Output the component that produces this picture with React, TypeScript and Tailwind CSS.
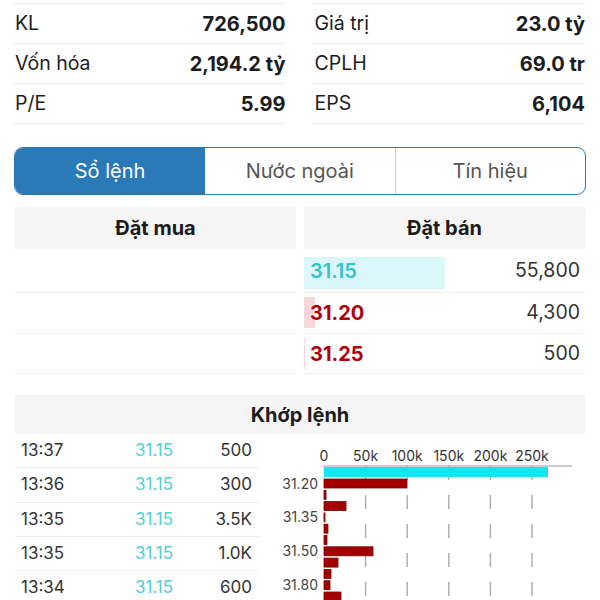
import React from "react";

const font = { fontFamily: "Inter, 'Noto Sans', sans-serif" };

const stats: [string, string, string, string][] = [
  ["KL", "726,500", "Giá trị", "23.0 tỷ"],
  ["Vốn hóa", "2,194.2 tỷ", "CPLH", "69.0 tr"],
  ["P/E", "5.99", "EPS", "6,104"],
];

const trades = [
  ["13:37", "31.15", "500"],
  ["13:36", "31.15", "300"],
  ["13:35", "31.15", "3.5K"],
  ["13:35", "31.15", "1.0K"],
  ["13:34", "31.15", "600"],
];

function Chart() {
  const x0 = 54;
  const step = 41.6;
  const ticks = ["0", "50k", "100k", "150k", "200k", "250k"];
  const bars = [83, 2, 22, 1, 4, 3, 49, 14, 7, 6, 17];
  const labels: Record<number, string> = { 0: "31.20", 3: "31.35", 6: "31.50", 9: "31.80" };
  return (
    <svg width="320" height="167" viewBox="0 0 320 167" className="block">
      {ticks.map((t, i) => (
        <text
          key={t}
          x={x0 + i * step}
          y={27}
          textAnchor="middle"
          fontSize="14"
          fill="#333"
          fontFamily="Inter, sans-serif"
        >
          {t}
        </text>
      ))}
      {ticks.slice(1).map((t, i) => (
        <line
          key={"g" + t}
          x1={x0 + (i + 1) * step}
          x2={x0 + (i + 1) * step}
          y1={32}
          y2={167}
          stroke="#b0b0b0"
          strokeWidth="1.5"
          strokeDasharray="14 15"
        />
      ))}
      <line x1={53} x2={302} y1={32} y2={32} stroke="#9a9a9a" strokeWidth="1" />
      <rect x={x0} y={33} width={224} height={10} fill="#12e6f0" />
      {bars.map((w, i) => (
        <rect
          key={i}
          x={x0}
          y={45 + i * 11.3}
          width={Math.max(w, 1)}
          height={9}
          fill="#a30000"
          stroke="#7a0000"
          strokeWidth="0.8"
        />
      ))}
      {Object.entries(labels).map(([k, v]) => (
        <text
          key={k}
          x={48}
          y={45 + Number(k) * 11.3 + 9.5}
          textAnchor="end"
          fontSize="14"
          fill="#444"
          fontFamily="Inter, sans-serif"
        >
          {v}
        </text>
      ))}
    </svg>
  );
}

export default function App() {
  return (
    <div className="w-[600px] h-[600px] overflow-hidden bg-white text-[#1c1c1e]" style={font}>
      {/* stats */}
      <div className="pt-[3px] pl-[13px] pr-[15px] grid grid-cols-2 gap-x-[27px]">
        {[0, 1].map((col) => (
          <div key={col} className="border-b border-[#ececec]">
            {stats.map((r) => (
              <div key={r[col * 2]} className="h-10 border-t border-[#ececec] flex items-center justify-between pl-[2px]">
                <span className="text-[19.5px]">{r[col * 2]}</span>
                <span className="text-[20px] font-bold">{r[col * 2 + 1]}</span>
              </div>
            ))}
          </div>
        ))}
      </div>

      {/* tabs */}
      <div className="mt-[23px] mx-[14px] h-12 rounded-[9px] border border-[#2c7ab5] flex overflow-hidden text-[20px]">
        <div className="w-[190px] bg-[#2a7ab8] text-white flex items-center justify-center">Sổ lệnh</div>
        <div className="flex-1 flex items-center justify-center text-[#555] border-r border-[#cfcfcf]">Nước ngoài</div>
        <div className="flex-1 flex items-center justify-center text-[#555]">Tín hiệu</div>
      </div>

      {/* order book */}
      <div className="mt-[12px] px-[15px] grid grid-cols-2 gap-x-2">
        <div>
          <div className="h-[42px] bg-[#f5f5f5] flex items-center justify-center text-[20px] font-bold">Đặt mua</div>
          <div className="h-[44px] border-b border-[#eeeeee]" />
          <div className="h-[41px] border-b border-[#eeeeee]" />
          <div className="h-[40px] border-b border-[#eeeeee]" />
        </div>
        <div>
          <div className="h-[42px] bg-[#f5f5f5] flex items-center justify-center text-[20px] font-bold">Đặt bán</div>
          <div className="h-[44px] border-b border-[#eeeeee] relative flex items-center justify-between pr-[5px]">
            <div className="absolute left-0 top-[8px] h-[32px] w-[141px] bg-[#dcf7f9]" />
            <span className="relative pl-[6px] text-[20px] font-semibold text-[#33c4cc]">31.15</span>
            <span className="relative text-[19.5px] text-[#333]">55,800</span>
          </div>
          <div className="h-[41px] border-b border-[#eeeeee] relative flex items-center justify-between pr-[5px]">
            <div className="absolute left-0 top-[4px] h-[31px] w-[11px] bg-[#f8d7da]" />
            <span className="relative pl-[6px] text-[20px] font-bold text-[#b0000c]">31.20</span>
            <span className="relative text-[19.5px] text-[#333]">4,300</span>
          </div>
          <div className="h-[40px] border-b border-[#eeeeee] relative flex items-center justify-between pr-[5px]">
            <div className="absolute left-0 top-[4px] h-[31px] w-[1px] bg-[#f8d7da]" />
            <span className="relative pl-[6px] text-[20px] font-bold text-[#b0000c]">31.25</span>
            <span className="relative text-[19.5px] text-[#333]">500</span>
          </div>
        </div>
      </div>

      {/* matched */}
      <div className="mt-[21px] mx-[15px] h-[39px] bg-[#f5f5f5] flex items-center justify-center text-[20px] font-bold">
        Khớp lệnh
      </div>
      <div className="flex pl-[15px]">
        <div className="w-[244px]">
          {trades.map((t, i) => (
            <div key={i} className={`${i === 1 ? "h-[35px]" : "h-[34px]"} border-b border-[#eeeeee] flex items-center text-[17px]`}>
              <span className="w-[120px] pl-[6px] text-[#333]">{t[0]}</span>
              <span className="w-[58px] text-[#4fcfd6]">{t[1]}</span>
              <span className="w-[59px] text-right text-[#333]">{t[2]}</span>
            </div>
          ))}
        </div>
        <div className="ml-[11px]">
          <Chart />
        </div>
      </div>
    </div>
  );
}
